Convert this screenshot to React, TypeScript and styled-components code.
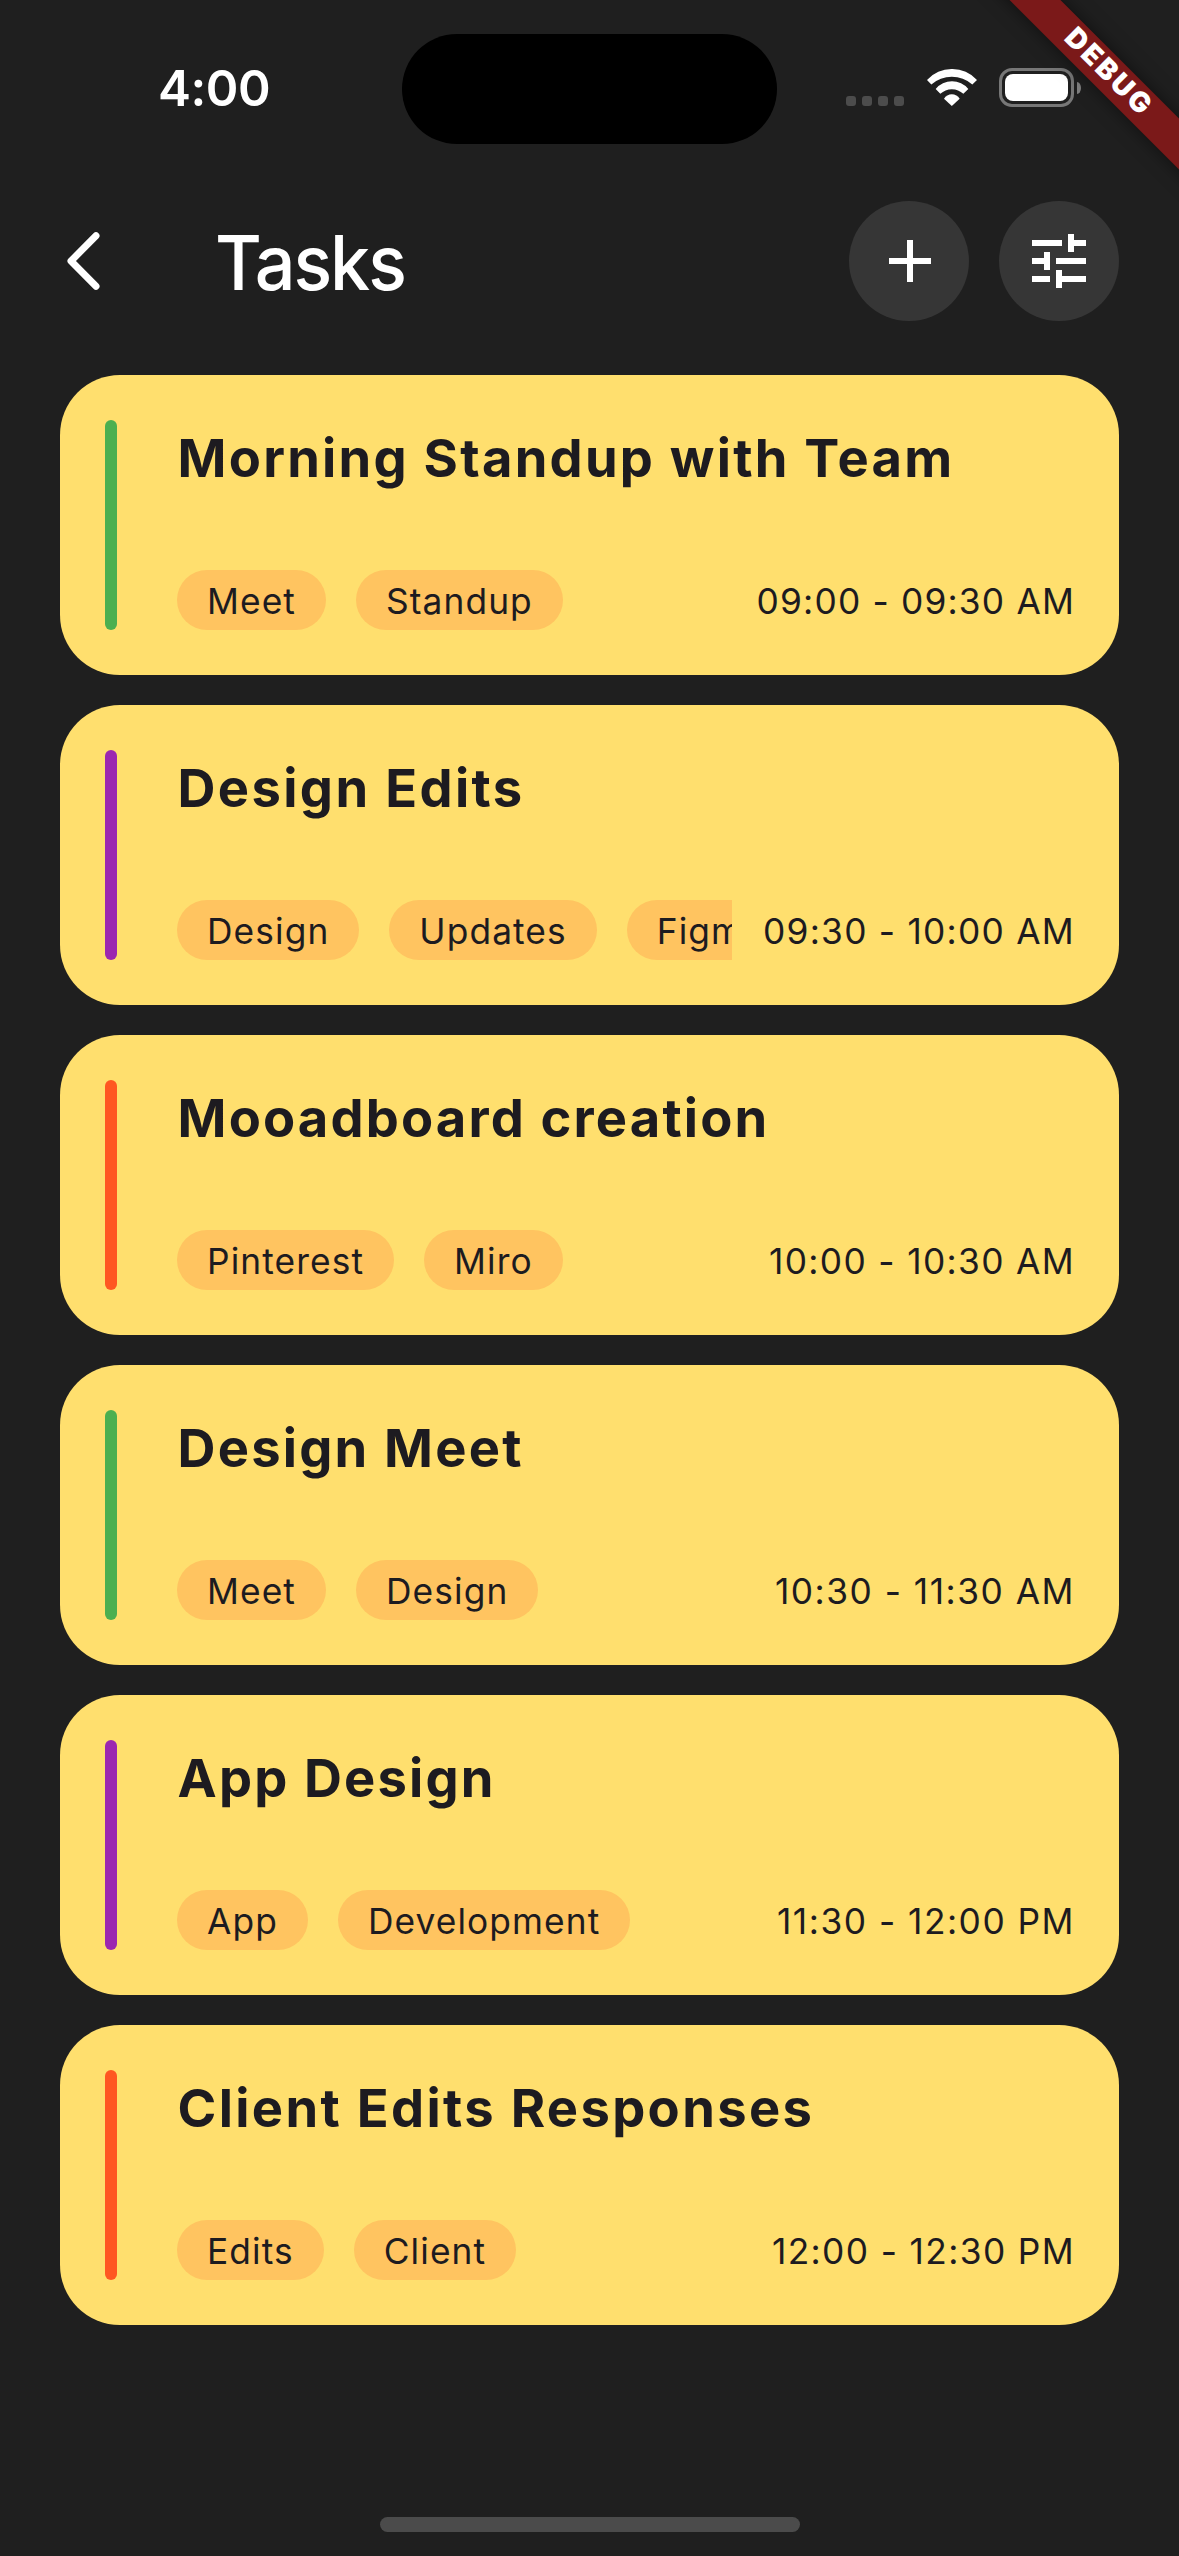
import React from "react";
import styled, { createGlobalStyle } from "styled-components";

type Task = {
  title: string;
  titleTracking: number;
  accent: string;
  tags: string[];
  time: string;
  timeTracking: number;
};

const GREEN = "#4caf50";
const PURPLE = "#9c27b0";
const ORANGE = "#ff5722";

const tasks: Task[] = [
  { title: "Morning Standup with Team", titleTracking: 2.24, accent: GREEN, tags: ["Meet", "Standup"], time: "09:00 - 09:30 AM", timeTracking: 1.18 },
  { title: "Design Edits", titleTracking: 2.36, accent: PURPLE, tags: ["Design", "Updates", "Figma"], time: "09:30 - 10:00 AM", timeTracking: 1.25 },
  { title: "Mooadboard creation", titleTracking: 2.15, accent: ORANGE, tags: ["Pinterest", "Miro"], time: "10:00 - 10:30 AM", timeTracking: 1.35 },
  { title: "Design Meet", titleTracking: 2.2, accent: GREEN, tags: ["Meet", "Design"], time: "10:30 - 11:30 AM", timeTracking: 1.5 },
  { title: "App Design", titleTracking: 2.15, accent: PURPLE, tags: ["App", "Development"], time: "11:30 - 12:00 PM", timeTracking: 1.5 },
  { title: "Client Edits Responses", titleTracking: 2.33, accent: ORANGE, tags: ["Edits", "Client"], time: "12:00 - 12:30 PM", timeTracking: 1.37 },
];

const GlobalStyle = createGlobalStyle`
  * { box-sizing: border-box; }
  body {
    margin: 0;
    background: #1f1f1f;
    font-family: Inter, "Liberation Sans", sans-serif;
  }
`;

const Screen = styled.main`
  position: relative;
  display: flex;
  flex-direction: column;
  width: 1179px;
  height: 2556px;
  overflow: hidden;
  background: #1f1f1f;
`;

const StatusBar = styled.div`
  display: grid;
  grid-template-columns: 402px 375px 402px;
  align-items: center;
  height: 178px;
`;

const Clock = styled.div`
  padding: 0 0 2px 158px;
  color: #fff;
  font-size: 49.5px;
  font-weight: 600;
  line-height: 60px;
  letter-spacing: -0.5px;
`;

const Island = styled.div`
  height: 110px;
  border-radius: 55px;
  background: #000;
`;

const StatusIcons = styled.div`
  display: flex;
  align-items: center;
  gap: 22.5px;
  padding: 0 0 3px 69px;
`;

const SignalDots = styled.div`
  display: flex;
  gap: 6px;
  margin-top: 27px;
`;

const Dot = styled.span`
  width: 10px;
  height: 10px;
  border-radius: 3px;
  background: #4c4c4c;
`;

const Battery = styled.div`
  display: flex;
  align-items: center;
  gap: 3px;
`;

const BatteryShell = styled.div`
  width: 75px;
  height: 39px;
  padding: 3px;
  border: 3px solid #777;
  border-radius: 13px;
`;

const BatteryLevel = styled.div`
  height: 27px;
  border-radius: 8px;
  background: #fff;
`;

const BatteryTip = styled.div`
  width: 4px;
  height: 12px;
  border-radius: 0 4px 4px 0 / 0 6px 6px 0;
  background: #808080;
`;

const RibbonCorner = styled.div`
  position: absolute;
  top: 0;
  right: 0;
  width: 260px;
  height: 260px;
  overflow: hidden;
  pointer-events: none;
`;

const Ribbon = styled.div`
  position: absolute;
  top: 54px;
  left: 38px;
  width: 300px;
  height: 36px;
  padding-left: 3px;
  background: #7b1919;
  box-shadow: 0 0 18px rgba(0, 0, 0, 0.5);
  color: #fff;
  font-size: 28px;
  font-weight: 900;
  line-height: 32px;
  letter-spacing: 2.8px;
  text-align: center;
  transform: rotate(45deg);
`;

const Header = styled.header`
  display: flex;
  align-items: center;
  height: 120px;
  margin-top: 23px;
  padding: 0 60px;
`;

const BackButton = styled.button`
  display: flex;
  width: 155px;
  padding: 0;
  border: 0;
  background: none;
`;

const Heading = styled.h1`
  flex: 1;
  margin: 0;
  padding-top: 3px;
  color: #fff;
  font-size: 75.6px;
  font-weight: 500;
  line-height: 92px;
  letter-spacing: -2.1px;
  transform: scaleX(0.95);
  transform-origin: left center;
`;

const Actions = styled.div`
  display: flex;
  gap: 30px;
`;

const RoundButton = styled.button`
  display: flex;
  align-items: center;
  justify-content: center;
  width: 120px;
  height: 120px;
  padding: 0;
  border: 0;
  border-radius: 50%;
  background: #363636;
`;

const TaskList = styled.section`
  display: flex;
  flex-direction: column;
  gap: 30px;
  padding: 54px 60px 0;
`;

const Card = styled.article`
  display: flex;
  gap: 60px;
  height: 300px;
  padding: 45px 44px 45px 45px;
  border-radius: 60px;
  background: #ffdf6e;
  color: #1d1b20;
`;

const Accent = styled.div<{ $color: string }>`
  flex: none;
  width: 12px;
  border-radius: 6px;
  background: ${(p) => p.$color};
`;

const CardBody = styled.div`
  display: flex;
  flex: 1;
  flex-direction: column;
  justify-content: space-between;
  min-width: 0;
`;

const Title = styled.h2<{ $tracking: number }>`
  margin: 0;
  padding-left: 0.6px;
  font-size: 52.5px;
  font-weight: 700;
  line-height: 76px;
  letter-spacing: ${(p) => p.$tracking}px;
  white-space: nowrap;
`;

const Meta = styled.div`
  display: flex;
  gap: 31px;
`;

const Tags = styled.div`
  display: flex;
  flex: 1;
  gap: 30px;
  min-width: 0;
  overflow: hidden;
`;

const Tag = styled.span`
  flex: none;
  height: 60px;
  padding: 3px 30px 0;
  border-radius: 30px;
  background: #ffc460;
  font-size: 35.3px;
  line-height: 58px;
  letter-spacing: 1.1px;
`;

const Time = styled.time<{ $tracking: number }>`
  flex: none;
  padding-top: 3px;
  font-size: 35.3px;
  line-height: 57px;
  letter-spacing: ${(p) => p.$tracking}px;
  white-space: nowrap;
`;

const HomeIndicator = styled.div`
  width: 420px;
  height: 15px;
  margin: auto auto 24px;
  border-radius: 7.5px;
  background: #4b4b4b;
`;

const WifiIcon = () => (
  <svg width="50" height="37" viewBox="440 207 150 111" fill="#fff">
    <path d="M440 240A101.7 101.7 0 0 1 590 240L576 253.500A93.7 93.7 0 0 0 453 253.500Z" />
    <path d="M466 267A63.700 63.700 0 0 1 564 267L549 281.500A49.500 49.500 0 0 0 480 281.500Z" />
    <path d="M491 296A27.700 27.700 0 0 1 538 296L514.500 318Z" />
  </svg>
);

const BackIcon = () => (
  <svg width="48" height="72" viewBox="0 0 48 72" fill="none" stroke="#fff" strokeWidth="7" strokeLinecap="round" strokeLinejoin="round">
    <path d="M36 10.800L11 36L36 61.200" />
  </svg>
);

const PlusIcon = () => (
  <svg width="72" height="72" viewBox="-0.333 0 24 24" fill="#fff">
    <path d="M19 13h-6v6h-2v-6H5v-2h6V5h2v6h6v2z" />
  </svg>
);

const TuneIcon = () => (
  <svg width="72" height="72" viewBox="0 0 24 24" fill="#fff">
    <path d="M3 17v2h6v-2H3zM3 5v2h10V5H3zm10 16v-2h8v-2h-8v-2h-2v6h2zM7 9v2H3v2h4v2h2V9H7zm14 4v-2H11v2h10zm-6-4h2V7h4V5h-4V3h-2v6z" />
  </svg>
);

const TaskCard = ({ task }: { task: Task }) => (
  <Card>
    <Accent $color={task.accent} />
    <CardBody>
      <Title $tracking={task.titleTracking}>{task.title}</Title>
      <Meta>
        <Tags>
          {task.tags.map((tag) => (
            <Tag key={tag}>{tag}</Tag>
          ))}
        </Tags>
        <Time $tracking={task.timeTracking}>{task.time}</Time>
      </Meta>
    </CardBody>
  </Card>
);

export default function App() {
  return (
    <>
      <GlobalStyle />
      <Screen>
        <StatusBar>
          <Clock>4:00</Clock>
          <Island />
          <StatusIcons>
            <SignalDots>
              <Dot />
              <Dot />
              <Dot />
              <Dot />
            </SignalDots>
            <WifiIcon />
            <Battery>
              <BatteryShell>
                <BatteryLevel />
              </BatteryShell>
              <BatteryTip />
            </Battery>
          </StatusIcons>
        </StatusBar>
        <Header>
          <BackButton aria-label="Back">
            <BackIcon />
          </BackButton>
          <Heading>Tasks</Heading>
          <Actions>
            <RoundButton aria-label="Add task">
              <PlusIcon />
            </RoundButton>
            <RoundButton aria-label="Filter tasks">
              <TuneIcon />
            </RoundButton>
          </Actions>
        </Header>
        <TaskList>
          {tasks.map((task) => (
            <TaskCard key={task.title} task={task} />
          ))}
        </TaskList>
        <HomeIndicator />
        <RibbonCorner>
          <Ribbon>DEBUG</Ribbon>
        </RibbonCorner>
      </Screen>
    </>
  );
}
